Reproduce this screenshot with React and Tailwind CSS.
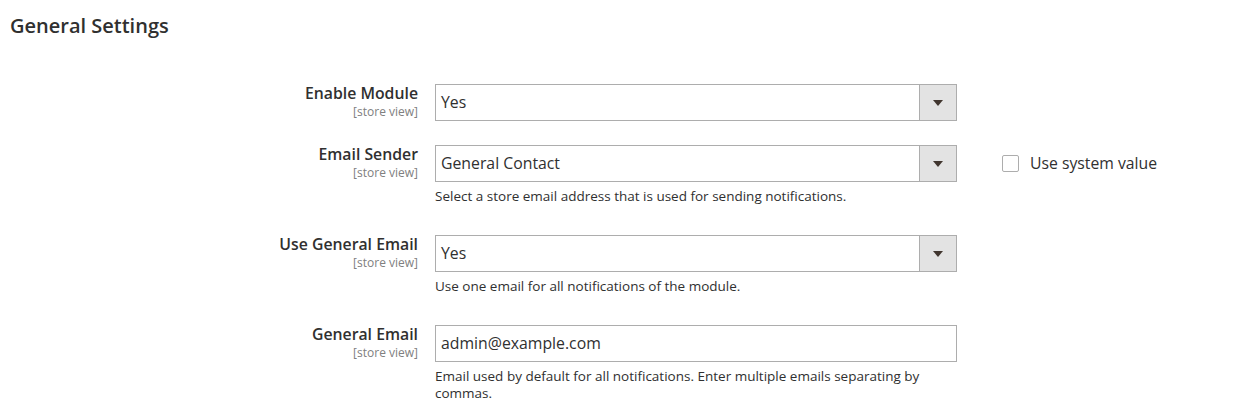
import React from 'react'

function Caret() {
  return (
    <svg width="10" height="6" viewBox="0 0 10 6" className="block">
      <path d="M0 0h10L5 6z" fill="#41362f" />
    </svg>
  )
}

function SelectBox({ value }) {
  return (
    <div className="flex h-[37px] w-[522px] border border-[#adadad] bg-white">
      <div className="flex flex-1 items-center px-[5px] pt-[1px] text-[15.8px] text-[#303030]">{value}</div>
      <div className="flex w-[37px] items-center justify-center border-l border-[#adadad] bg-[#e3e3e3]">
        <Caret />
      </div>
    </div>
  )
}

function TextInput({ value }) {
  return (
    <div className="flex h-[37px] w-[522px] items-center border border-[#adadad] bg-white px-[5px] pt-[1px] text-[15.8px] text-[#303030]">
      {value}
    </div>
  )
}

function Row({ label, children, note, extra, className }) {
  return (
    <div className={`flex ${className || ''}`}>
      <div className="w-[418px] text-right">
        <div className="text-[15.8px] font-semibold leading-[18px] text-[#303030]">{label}</div>
        <div className="mt-[2px] text-[12px] leading-[16px] text-[#808080]">[store view]</div>
      </div>
      <div className="ml-[17px] w-[522px]">
        {children}
        {note && <p className="mt-[6px] text-[13.5px] leading-[17px] text-[#303030]">{note}</p>}
      </div>
      {extra}
    </div>
  )
}

export default function App() {
  return (
    <div className="h-[420px] w-[1260px] bg-white font-['Open_Sans',sans-serif]">
      <h2 className="pl-[10px] pt-[12px] text-[20px] font-semibold leading-[28px] text-[#303030]">General Settings</h2>
      <div className="mt-[44px]">
        <Row label="Enable Module">
          <SelectBox value="Yes" />
        </Row>
        <Row
          label="Email Sender"
          className="mt-[24px]"
          note="Select a store email address that is used for sending notifications."
          extra={
            <label className="ml-[45px] flex h-[37px] items-center">
              <span className="h-[17px] w-[17px] rounded-[2px] border border-[#adadad] bg-white" />
              <span className="ml-[11px] text-[15.75px] text-[#303030]">Use system value</span>
            </label>
          }
        >
          <SelectBox value="General Contact" />
        </Row>
        <Row label="Use General Email" className="mt-[30px]" note="Use one email for all notifications of the module.">
          <SelectBox value="Yes" />
        </Row>
        <Row
          label="General Email"
          className="mt-[30px]"
          note="Email used by default for all notifications. Enter multiple emails separating by commas."
        >
          <TextInput value="admin@example.com" />
        </Row>
      </div>
    </div>
  )
}
